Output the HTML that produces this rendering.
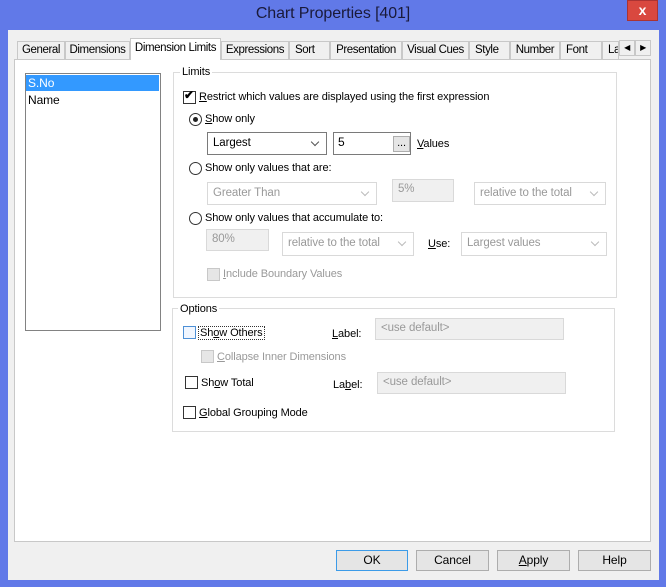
<!DOCTYPE html>
<html><head><meta charset="utf-8"><style>
*{box-sizing:border-box;margin:0;padding:0}
body{width:666px;height:587px;overflow:hidden;background:#6179e8;font-family:"Liberation Sans",sans-serif;font-size:11px;letter-spacing:-0.1px;color:#000;position:relative}
.a{position:absolute;white-space:nowrap}
.client{position:absolute;left:8px;top:30px;width:651px;height:550px;background:#f0f0f0}
.tab{position:absolute;top:41px;height:18px;border:1px solid #c8c8c8;border-bottom:none;background:#f0f0f0;text-align:center;line-height:16px;font-size:11.5px;letter-spacing:-0.4px}
.panel{position:absolute;left:14px;top:59px;width:637px;height:483px;background:#fff;border:1px solid #c8c8c8}
.grp{position:absolute;border:1px solid #dcdcdc}
.gl{position:absolute;background:#fff;padding:0 2px;font-size:11px}
.cb{position:absolute;width:13px;height:13px;border:1px solid #333;background:#fff}
.cbd{position:absolute;width:13px;height:13px;border:1px solid #c8c8c8;background:#e6e6e6}
.rd{position:absolute;width:13px;height:13px;border:1px solid #333;border-radius:50%;background:#fff}
.combo{position:absolute;border:1px solid #7a7a7a;background:#fff;padding-left:5px;line-height:21px;font-size:11.5px}
.combo.dis{border-color:#d9d9d9;color:#999}
.combo::after{content:"";position:absolute;right:8px;top:6px;width:5px;height:5px;border-right:1.5px solid #555;border-bottom:1.5px solid #555;transform:rotate(45deg)}
.combo.dis::after{border-color:#bbb}
.tb{position:absolute;border:1px solid #d9d9d9;background:#f0f0f0;color:#999;padding-left:5px;line-height:18px;font-size:11.5px}
.btn{position:absolute;top:550px;height:21px;width:72px;border:1px solid #adadad;background:#e5e5e5;text-align:center;line-height:19px;font-size:12px}
u{text-decoration:underline}
</style></head><body>
<div class="a" style="left:0;top:5px;width:666px;text-align:center;font-size:16px;color:#1a1a3a">Chart Properties [401]</div>
<div class="a" style="left:627px;top:0;width:31px;height:21px;background:#d9483f;border:1px solid #a33;color:#fff;font-weight:bold;text-align:center;line-height:19px;font-size:14px">x</div>
<div class="client"></div>
<div class="tab" style="left:17px;width:48px">General</div>
<div class="tab" style="left:65px;width:65px">Dimensions</div>
<div class="tab" style="left:221px;width:68px">Expressions</div>
<div class="tab" style="left:289px;width:41px;text-align:left;padding-left:5px">Sort</div>
<div class="tab" style="left:330px;width:72px">Presentation</div>
<div class="tab" style="left:402px;width:67px">Visual Cues</div>
<div class="tab" style="left:469px;width:41px;text-align:left;padding-left:5px">Style</div>
<div class="tab" style="left:510px;width:50px">Number</div>
<div class="tab" style="left:560px;width:42px;text-align:left;padding-left:5px">Font</div>
<div class="tab" style="left:602px;width:17px;text-align:left;padding-left:5px;overflow:hidden">La</div>
<div class="tab" style="left:619px;width:16px;top:40px;height:16px;border:1px solid #c8c8c8;font-size:8px;line-height:14px">◀</div>
<div class="tab" style="left:635px;width:16px;top:40px;height:16px;border:1px solid #c8c8c8;font-size:8px;line-height:14px">▶</div>
<div class="panel"></div>
<div class="tab" style="left:130px;width:91px;top:38px;height:22px;background:#fff;line-height:18px;z-index:2">Dimension Limits</div>

<div class="a" style="left:25px;top:73px;width:136px;height:258px;border:1px solid #828282;background:#fff"></div>
<div class="a" style="left:26px;top:75px;width:133px;height:16px;background:#3399ff;color:#fff;padding-left:2px;line-height:16px;font-size:12px">S.No</div>
<div class="a" style="left:28px;top:92px;line-height:16px;font-size:12px">Name</div>

<div class="grp" style="left:173px;top:72px;width:444px;height:226px"></div>
<div class="gl" style="left:180px;top:66px">Limits</div>
<div class="cb" style="left:183px;top:91px"></div>
<div class="a" style="left:184px;top:88px;font-size:12px;font-weight:bold">✔</div>
<div class="a" style="left:199px;top:91px"><u>R</u>estrict which values are displayed using the first expression</div>
<div class="rd" style="left:189px;top:113px"></div>
<div class="a" style="left:193px;top:117px;width:5px;height:5px;border-radius:50%;background:#222"></div>
<div class="a" style="left:205px;top:113px"><u>S</u>how only</div>
<div class="combo" style="left:207px;top:132px;width:120px;height:23px">Largest</div>
<div class="a" style="left:333px;top:132px;width:78px;height:23px;border:1px solid #7a7a7a;background:#fff;padding-left:4px;line-height:19px;font-size:12px">5</div>
<div class="a" style="left:393px;top:136px;width:17px;height:16px;border:1px solid #adadad;background:#e5e5e5;text-align:center;line-height:12px">...</div>
<div class="a" style="left:417px;top:138px"><u>V</u>alues</div>
<div class="rd" style="left:189px;top:162px"></div>
<div class="a" style="left:205px;top:162px">Show only values that are:</div>
<div class="combo dis" style="left:207px;top:182px;width:170px;height:23px">Greater Than</div>
<div class="tb" style="left:392px;top:179px;width:62px;height:23px">5%</div>
<div class="combo dis" style="left:474px;top:182px;width:132px;height:23px">relative to the total</div>
<div class="rd" style="left:189px;top:212px"></div>
<div class="a" style="left:205px;top:212px">Show only values that accumulate to:</div>
<div class="tb" style="left:206px;top:229px;width:63px;height:22px">80%</div>
<div class="combo dis" style="left:282px;top:232px;width:132px;height:24px">relative to the total</div>
<div class="a" style="left:428px;top:238px"><u>U</u>se:</div>
<div class="combo dis" style="left:461px;top:232px;width:146px;height:24px">Largest values</div>
<div class="cbd" style="left:207px;top:268px"></div>
<div class="a" style="left:223px;top:268px;color:#999"><u>I</u>nclude Boundary Values</div>

<div class="grp" style="left:172px;top:308px;width:443px;height:124px"></div>
<div class="gl" style="left:178px;top:303px">Options</div>
<div class="cb" style="left:183px;top:326px;border-color:#4d90d6;background:#f0f6ff"></div>
<div class="a" style="left:198px;top:326px;border:1px dotted #333;padding:0 1px">Sh<u>o</u>w Others</div>
<div class="a" style="left:332px;top:328px"><u>L</u>abel:</div>
<div class="tb" style="left:375px;top:318px;width:189px;height:22px">&lt;use default&gt;</div>
<div class="cbd" style="left:201px;top:350px"></div>
<div class="a" style="left:217px;top:351px;color:#999"><u>C</u>ollapse Inner Dimensions</div>
<div class="cb" style="left:185px;top:376px"></div>
<div class="a" style="left:201px;top:377px">Sh<u>o</u>w Total</div>
<div class="a" style="left:333px;top:379px">La<u>b</u>el:</div>
<div class="tb" style="left:377px;top:372px;width:189px;height:22px">&lt;use default&gt;</div>
<div class="cb" style="left:183px;top:406px"></div>
<div class="a" style="left:199px;top:407px"><u>G</u>lobal Grouping Mode</div>

<div class="btn" style="left:336px;border-color:#3c9be8">OK</div>
<div class="btn" style="left:416px;width:73px">Cancel</div>
<div class="btn" style="left:497px;width:73px"><u>A</u>pply</div>
<div class="btn" style="left:578px;width:73px">Help</div>
</body></html>
